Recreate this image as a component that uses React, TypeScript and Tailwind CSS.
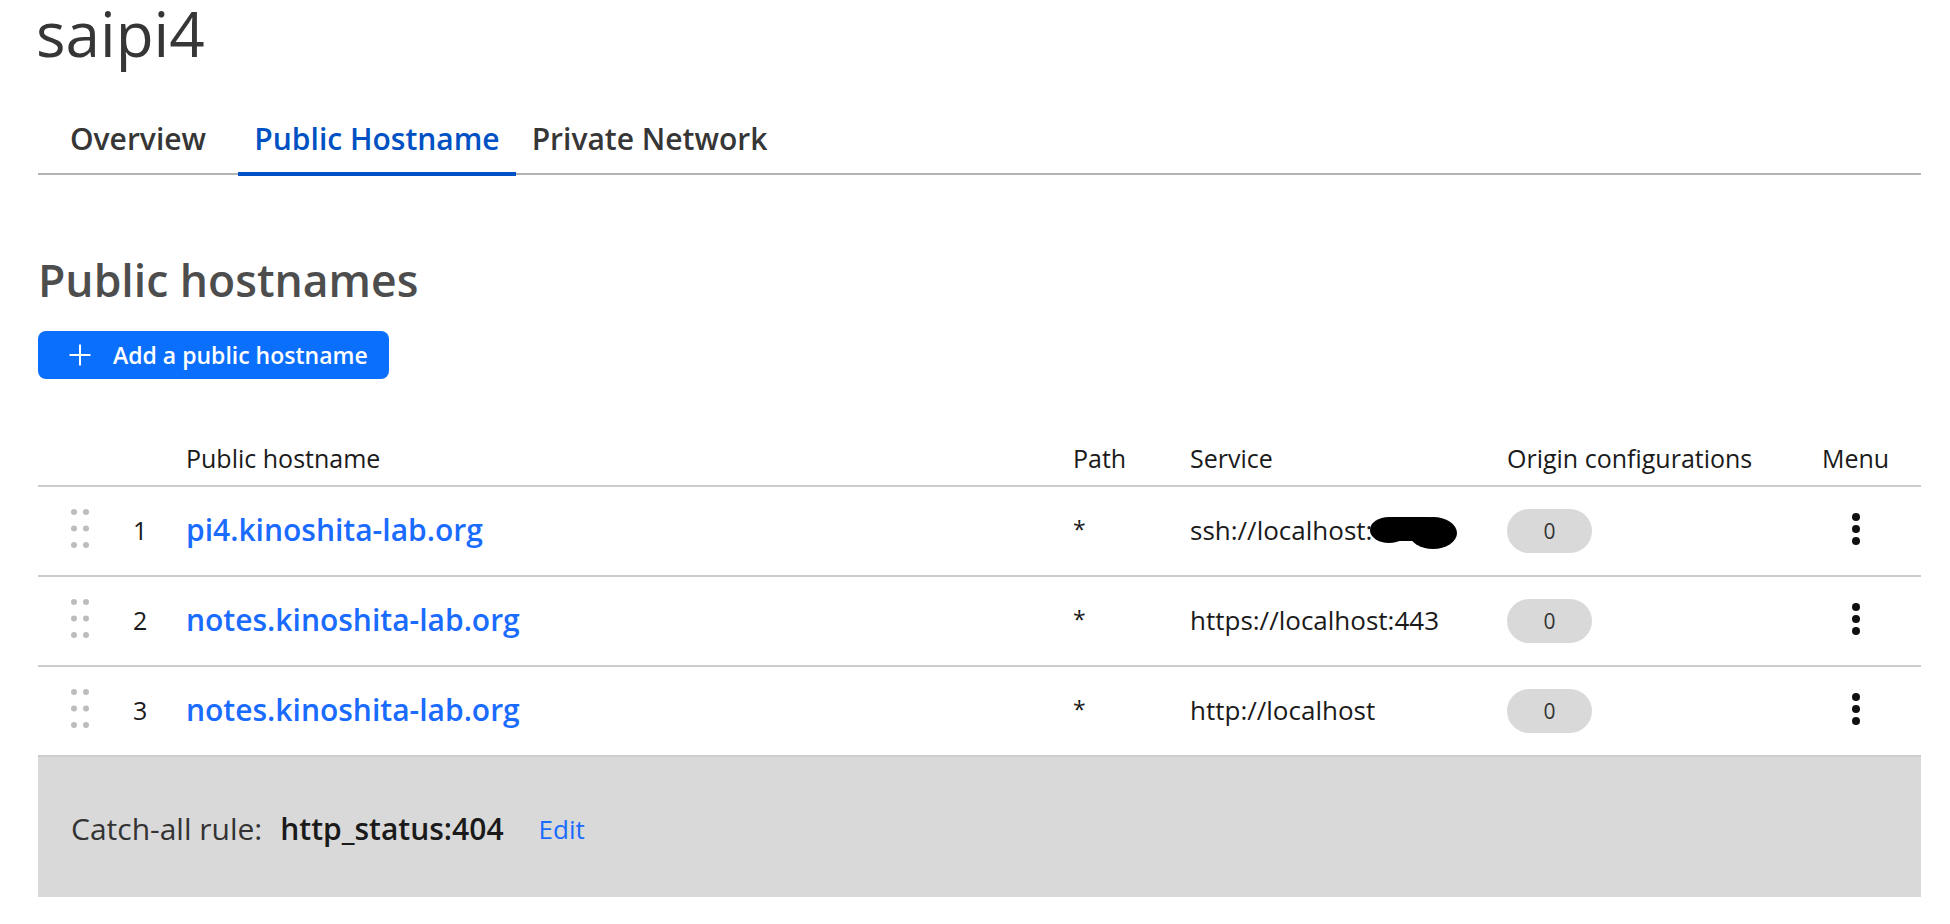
import React from "react";

function DragHandle() {
  return (
    <svg width="18" height="40" viewBox="0 0 18 40" className="block">
      {[3, 19.5, 36].map((y) => (
        <g key={y} fill="#bdbdbd">
          <circle cx="3" cy={y} r="3" />
          <circle cx="15" cy={y} r="3" />
        </g>
      ))}
    </svg>
  );
}

function Kebab() {
  return (
    <svg width="8" height="32" viewBox="0 0 8 32" className="block">
      <circle cx="4" cy="4" r="4" fill="#111" />
      <circle cx="4" cy="16" r="4" fill="#111" />
      <circle cx="4" cy="28" r="4" fill="#111" />
    </svg>
  );
}

function Blob() {
  return (
    <svg width="87" height="34" viewBox="0 0 87 34" className="block">
      <g fill="#000">
        <ellipse cx="19" cy="14" rx="19" ry="13" />
        <ellipse cx="63" cy="17" rx="24" ry="16" />
        <rect x="12" y="1" width="56" height="24" rx="10" />
      </g>
    </svg>
  );
}

function PlusIcon() {
  return (
    <svg width="24" height="24" viewBox="0 0 24 24" className="block">
      <path d="M12 1.5V22.5M1.5 12H22.5" stroke="#fff" strokeWidth="2" fill="none" />
    </svg>
  );
}

const rows = [
  { n: 1, host: "pi4.kinoshita-lab.org", service: "ssh://localhost:", redacted: true },
  { n: 2, host: "notes.kinoshita-lab.org", service: "https://localhost:443", redacted: false },
  { n: 3, host: "notes.kinoshita-lab.org", service: "http://localhost", redacted: false },
];

export default function App() {
  return (
    <div className="min-h-screen bg-white font-['Open_Sans',sans-serif]">
      <div className="ml-[38px] w-[1883px]">
        <h1 className="-ml-[2px] pt-[2px] text-[62px] leading-[62px] font-normal text-[#363636]">saipi4</h1>

        <div className="mt-[55px] flex border-b-2 border-[#b3b3b3]">
          <div className="w-[200px] pb-[14px] text-center text-[30px] leading-[40px] font-semibold text-[#363636]">
            Overview
          </div>
          <div className="relative w-[278px] pb-[14px] text-center text-[30px] leading-[40px] font-semibold text-[#0051c3]">
            Public Hostname
            <span className="absolute left-0 right-0 bottom-[-3px] h-[4px] bg-[#0051c3]" />
          </div>
          <div className="w-[267px] pb-[14px] text-center text-[30px] leading-[40px] font-semibold text-[#363636]">
            Private Network
          </div>
        </div>

        <h2 className="mt-[78px] text-[44.5px] leading-[54px] font-semibold text-[#4d4d4d]">Public hostnames</h2>

        <button className="mt-[24px] flex h-[48px] w-[351px] items-center gap-[21px] rounded-[8px] bg-[#0b6ffd] pl-[30px] text-[23px] leading-[30px] font-semibold text-white">
          <PlusIcon />
          <span>Add a public hostname</span>
        </button>

        <div className="mt-[62px]">
          <div className="flex border-b-2 border-[#cccccc] pb-[10px] text-[25px] leading-[34px] font-medium text-[#1a1a1a]">
            <div className="w-[148px]" />
            <div className="w-[887px]">Public hostname</div>
            <div className="w-[117px]">Path</div>
            <div className="w-[317px]">Service</div>
            <div className="w-[315px]">Origin configurations</div>
            <div className="flex-1">Menu</div>
          </div>

          {rows.map((r) => (
            <div key={r.n} className="flex h-[90px] items-center border-b-2 border-[#cccccc]">
              <div className="w-[95px] pl-[33px] pb-[4px]">
                <DragHandle />
              </div>
              <div className="w-[53px] pb-[2px] text-[25px] leading-[34px] text-[#1a1a1a]">{r.n}</div>
              <div className="w-[887px] pb-[2px] text-[30px] leading-[40px] font-semibold text-[#1a6bff]">{r.host}</div>
              <div className="w-[117px] pb-[5px] text-[23px] leading-[34px] font-normal text-[#1a1a1a]">*</div>
              <div className="flex w-[317px] items-center pb-[2px] text-[26px] leading-[34px] text-[#1a1a1a]">
                <span>{r.service}</span>
                {r.redacted && (
                  <span className="-ml-[2px] mt-[6px]">
                    <Blob />
                  </span>
                )}
              </div>
              <div className="w-[315px]">
                <div className="flex h-[44px] w-[85px] items-center justify-center rounded-full bg-[#d9d9d9] text-[21px] leading-[28px] text-[#333]">
                  0
                </div>
              </div>
              <div className="flex-1 pb-[4px]">
                <div className="flex w-[67px] justify-center">
                  <Kebab />
                </div>
              </div>
            </div>
          ))}

          <div className="flex h-[140px] items-center bg-[#d9d9d9] pl-[33px] pt-[3px] text-[30px] leading-[40px]">
            <span className="text-[#333]">Catch-all rule:</span>
            <span className="ml-[18px] font-semibold text-[#1a1a1a]">http_status:404</span>
            <span className="ml-[35px] text-[26px] text-[#1a6bff]">Edit</span>
          </div>
        </div>
      </div>
    </div>
  );
}
